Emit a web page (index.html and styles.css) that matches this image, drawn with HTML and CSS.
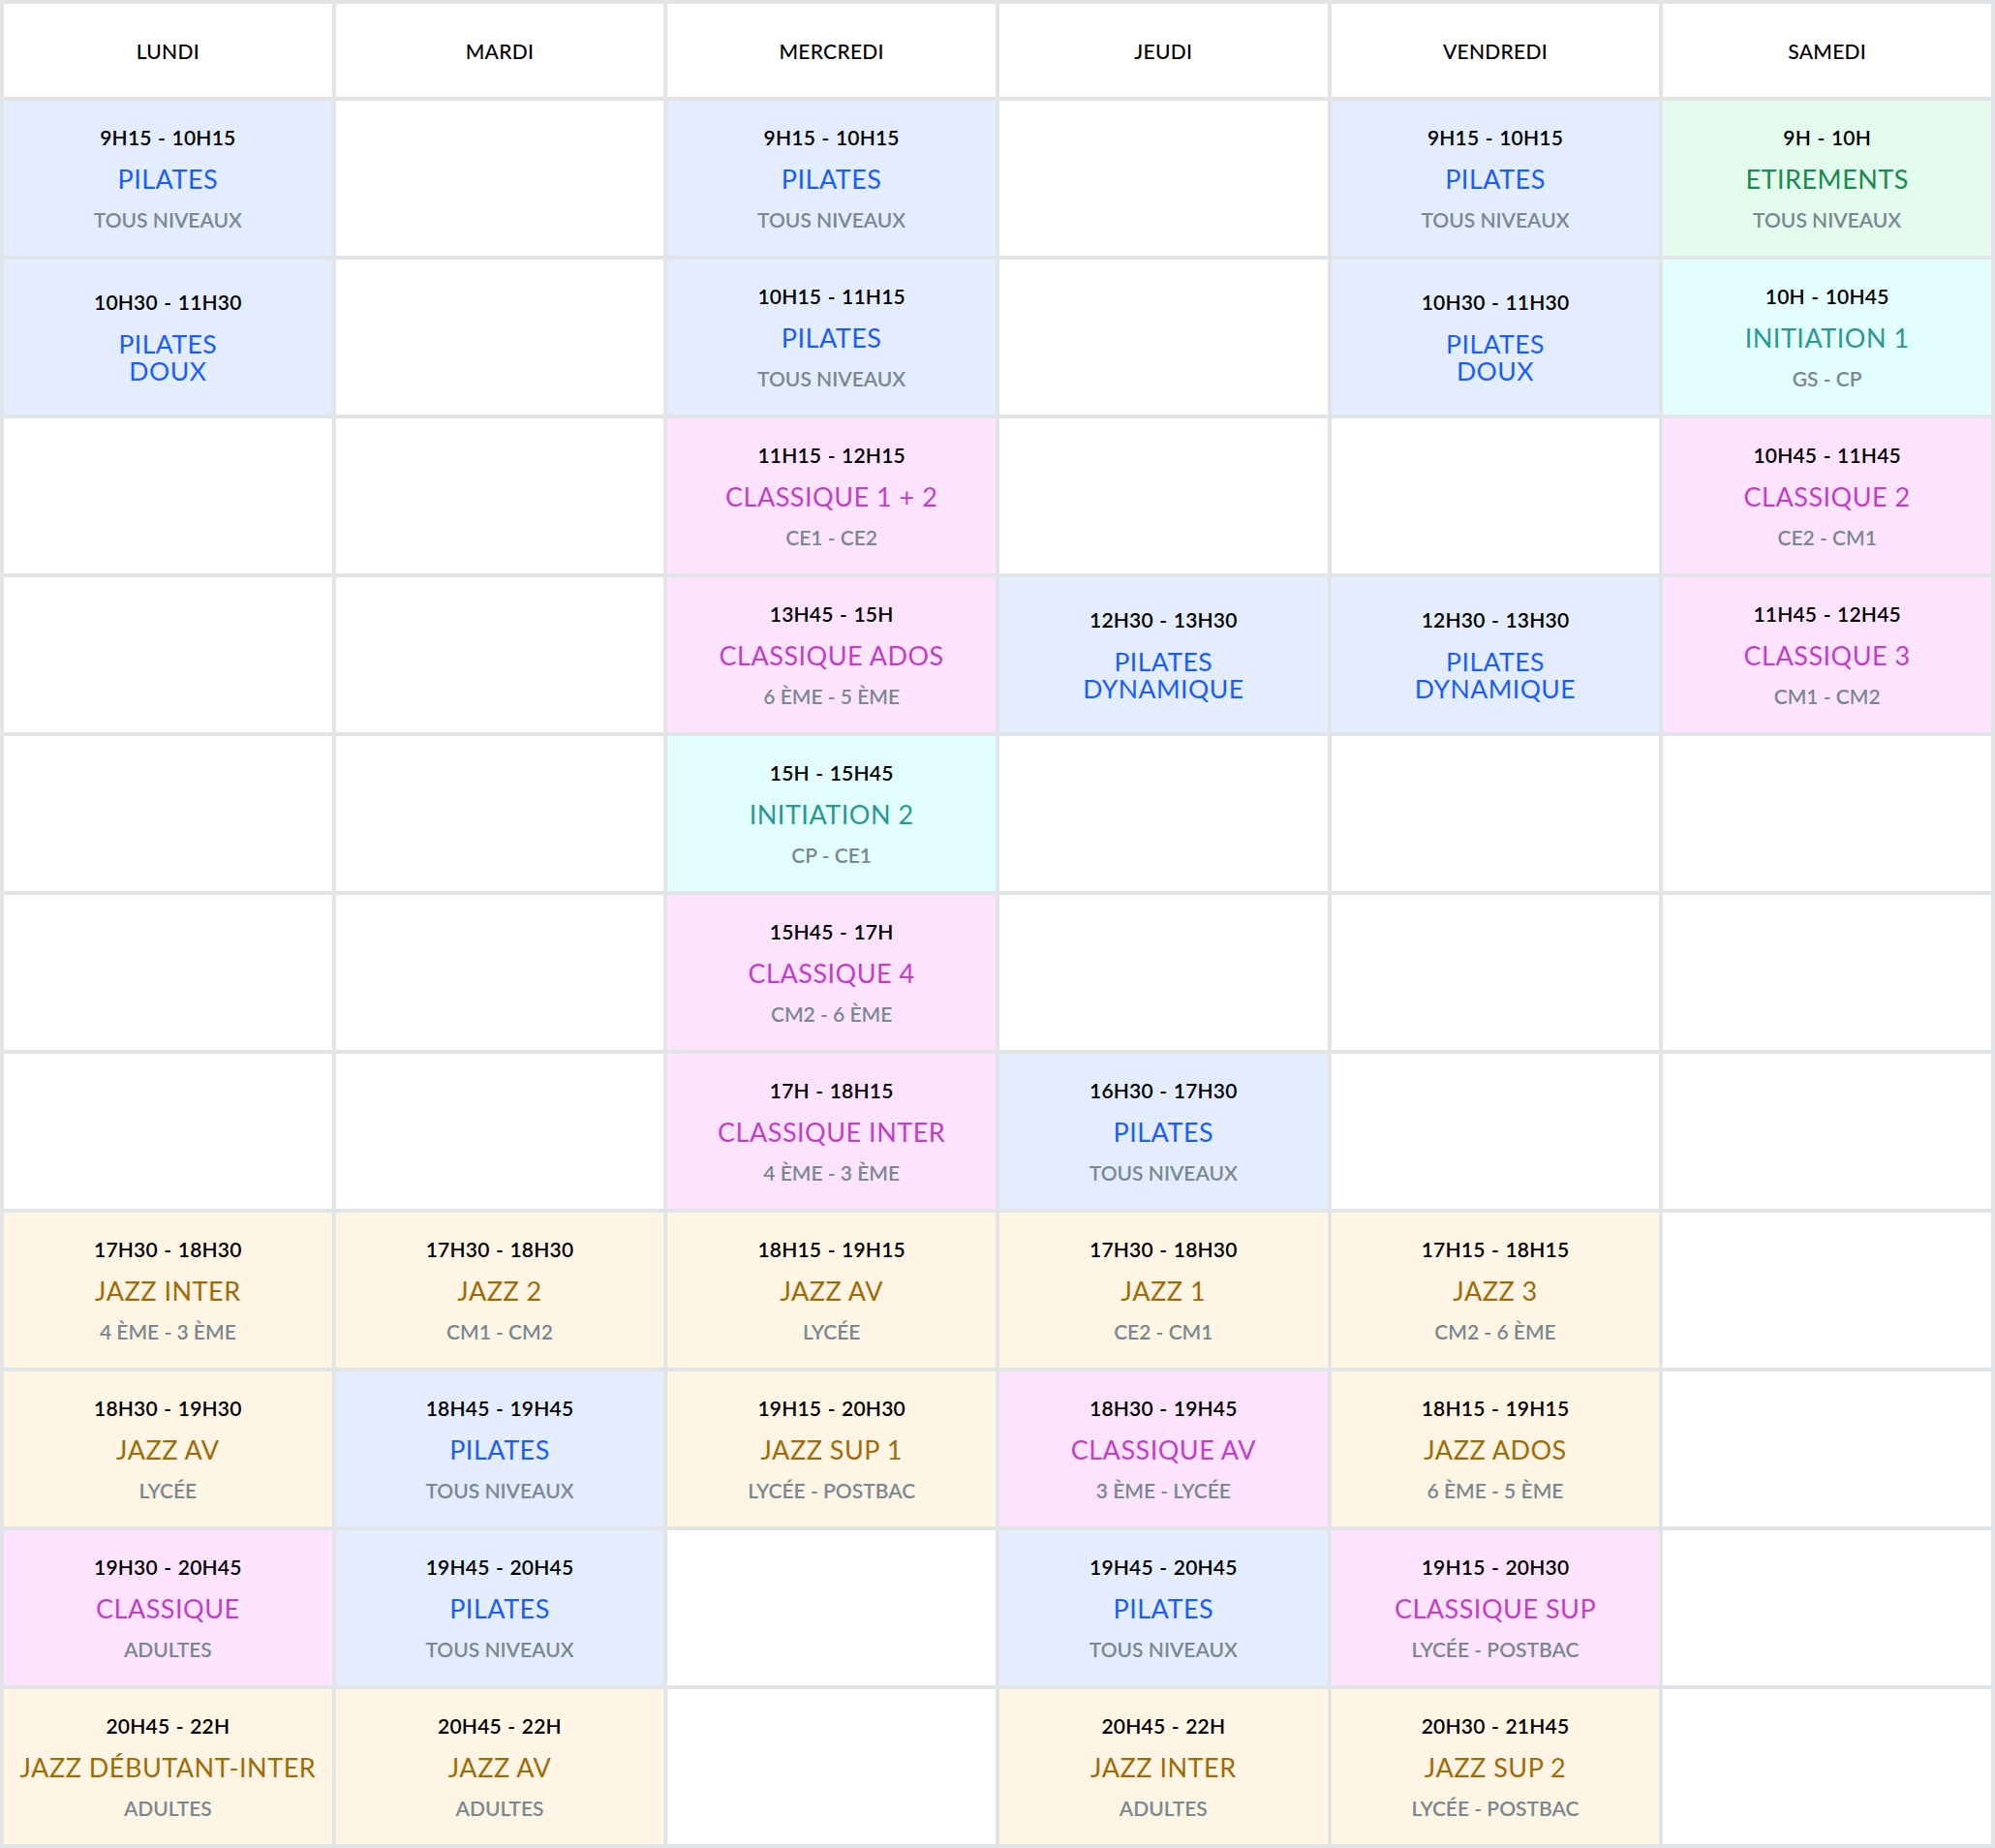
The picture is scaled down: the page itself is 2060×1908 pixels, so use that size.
FILE: index.html
```html
<!DOCTYPE html>
<html lang="fr">
<head>
<meta charset="utf-8">
<title>Planning</title>
<link rel="stylesheet" href="styles.css">
</head>
<body>
<div class="schedule">
  <div class="head">LUNDI</div>
  <div class="head">MARDI</div>
  <div class="head">MERCREDI</div>
  <div class="head">JEUDI</div>
  <div class="head">VENDREDI</div>
  <div class="head">SAMEDI</div>

  <!-- row 1 -->
  <div class="cell blue"><span class="time">9H15 - 10H15</span><span class="title">PILATES</span><span class="sub">TOUS NIVEAUX</span></div>
  <div class="cell"></div>
  <div class="cell blue"><span class="time">9H15 - 10H15</span><span class="title">PILATES</span><span class="sub">TOUS NIVEAUX</span></div>
  <div class="cell"></div>
  <div class="cell blue"><span class="time">9H15 - 10H15</span><span class="title">PILATES</span><span class="sub">TOUS NIVEAUX</span></div>
  <div class="cell green"><span class="time">9H - 10H</span><span class="title">ETIREMENTS</span><span class="sub">TOUS NIVEAUX</span></div>

  <!-- row 2 -->
  <div class="cell blue"><span class="time">10H30 - 11H30</span><span class="title two">PILATES<br>DOUX</span></div>
  <div class="cell"></div>
  <div class="cell blue"><span class="time">10H15 - 11H15</span><span class="title">PILATES</span><span class="sub">TOUS NIVEAUX</span></div>
  <div class="cell"></div>
  <div class="cell blue"><span class="time">10H30 - 11H30</span><span class="title two">PILATES<br>DOUX</span></div>
  <div class="cell cyan"><span class="time">10H - 10H45</span><span class="title">INITIATION 1</span><span class="sub">GS - CP</span></div>

  <!-- row 3 -->
  <div class="cell"></div>
  <div class="cell"></div>
  <div class="cell pink"><span class="time">11H15 - 12H15</span><span class="title">CLASSIQUE 1 + 2</span><span class="sub">CE1 - CE2</span></div>
  <div class="cell"></div>
  <div class="cell"></div>
  <div class="cell pink"><span class="time">10H45 - 11H45</span><span class="title">CLASSIQUE 2</span><span class="sub">CE2 - CM1</span></div>

  <!-- row 4 -->
  <div class="cell"></div>
  <div class="cell"></div>
  <div class="cell pink"><span class="time">13H45 - 15H</span><span class="title">CLASSIQUE ADOS</span><span class="sub">6 ÈME - 5 ÈME</span></div>
  <div class="cell blue"><span class="time">12H30 - 13H30</span><span class="title two">PILATES<br>DYNAMIQUE</span></div>
  <div class="cell blue"><span class="time">12H30 - 13H30</span><span class="title two">PILATES<br>DYNAMIQUE</span></div>
  <div class="cell pink"><span class="time">11H45 - 12H45</span><span class="title">CLASSIQUE 3</span><span class="sub">CM1 - CM2</span></div>

  <!-- row 5 -->
  <div class="cell"></div>
  <div class="cell"></div>
  <div class="cell cyan"><span class="time">15H - 15H45</span><span class="title">INITIATION 2</span><span class="sub">CP - CE1</span></div>
  <div class="cell"></div>
  <div class="cell"></div>
  <div class="cell"></div>

  <!-- row 6 -->
  <div class="cell"></div>
  <div class="cell"></div>
  <div class="cell pink"><span class="time">15H45 - 17H</span><span class="title">CLASSIQUE 4</span><span class="sub">CM2 - 6 ÈME</span></div>
  <div class="cell"></div>
  <div class="cell"></div>
  <div class="cell"></div>

  <!-- row 7 -->
  <div class="cell"></div>
  <div class="cell"></div>
  <div class="cell pink"><span class="time">17H - 18H15</span><span class="title">CLASSIQUE INTER</span><span class="sub">4 ÈME - 3 ÈME</span></div>
  <div class="cell blue"><span class="time">16H30 - 17H30</span><span class="title">PILATES</span><span class="sub">TOUS NIVEAUX</span></div>
  <div class="cell"></div>
  <div class="cell"></div>

  <!-- row 8 -->
  <div class="cell yellow"><span class="time">17H30 - 18H30</span><span class="title">JAZZ INTER</span><span class="sub">4 ÈME - 3 ÈME</span></div>
  <div class="cell yellow"><span class="time">17H30 - 18H30</span><span class="title">JAZZ 2</span><span class="sub">CM1 - CM2</span></div>
  <div class="cell yellow"><span class="time">18H15 - 19H15</span><span class="title">JAZZ AV</span><span class="sub">LYCÉE</span></div>
  <div class="cell yellow"><span class="time">17H30 - 18H30</span><span class="title">JAZZ 1</span><span class="sub">CE2 - CM1</span></div>
  <div class="cell yellow"><span class="time">17H15 - 18H15</span><span class="title">JAZZ 3</span><span class="sub">CM2 - 6 ÈME</span></div>
  <div class="cell"></div>

  <!-- row 9 -->
  <div class="cell yellow"><span class="time">18H30 - 19H30</span><span class="title">JAZZ AV</span><span class="sub">LYCÉE</span></div>
  <div class="cell blue"><span class="time">18H45 - 19H45</span><span class="title">PILATES</span><span class="sub">TOUS NIVEAUX</span></div>
  <div class="cell yellow"><span class="time">19H15 - 20H30</span><span class="title">JAZZ SUP 1</span><span class="sub">LYCÉE - POSTBAC</span></div>
  <div class="cell pink"><span class="time">18H30 - 19H45</span><span class="title">CLASSIQUE AV</span><span class="sub">3 ÈME - LYCÉE</span></div>
  <div class="cell yellow"><span class="time">18H15 - 19H15</span><span class="title">JAZZ ADOS</span><span class="sub">6 ÈME - 5 ÈME</span></div>
  <div class="cell"></div>

  <!-- row 10 -->
  <div class="cell pink"><span class="time">19H30 - 20H45</span><span class="title">CLASSIQUE</span><span class="sub">ADULTES</span></div>
  <div class="cell blue"><span class="time">19H45 - 20H45</span><span class="title">PILATES</span><span class="sub">TOUS NIVEAUX</span></div>
  <div class="cell"></div>
  <div class="cell blue"><span class="time">19H45 - 20H45</span><span class="title">PILATES</span><span class="sub">TOUS NIVEAUX</span></div>
  <div class="cell pink"><span class="time">19H15 - 20H30</span><span class="title">CLASSIQUE SUP</span><span class="sub">LYCÉE - POSTBAC</span></div>
  <div class="cell"></div>

  <!-- row 11 -->
  <div class="cell yellow"><span class="time">20H45 - 22H</span><span class="title">JAZZ DÉBUTANT-INTER</span><span class="sub">ADULTES</span></div>
  <div class="cell yellow"><span class="time">20H45 - 22H</span><span class="title">JAZZ AV</span><span class="sub">ADULTES</span></div>
  <div class="cell"></div>
  <div class="cell yellow"><span class="time">20H45 - 22H</span><span class="title">JAZZ INTER</span><span class="sub">ADULTES</span></div>
  <div class="cell yellow"><span class="time">20H30 - 21H45</span><span class="title">JAZZ SUP 2</span><span class="sub">LYCÉE - POSTBAC</span></div>
  <div class="cell"></div>
</div>
</body>
</html>
```
FILE: styles.css
```css
html, body {
  margin: 0;
  padding: 0;
  background: #ffffff;
}

body {
  font-family: "Lato", "Liberation Sans", sans-serif;
  color: #000000;
}

.schedule {
  width: 2060px;
  height: 1908px;
  box-sizing: border-box;
  display: grid;
  grid-template-columns: repeat(6, 1fr);
  grid-template-rows: 96px repeat(11, 160px);
  gap: 4px;
  padding: 4px;
  background: #e2e5e7;
}

.head {
  background: #ffffff;
  display: flex;
  align-items: center;
  justify-content: center;
  font-size: 21px;
  font-weight: 500;
  letter-spacing: 0.3px;
}

.cell {
  background: #ffffff;
  display: flex;
  flex-direction: column;
  align-items: center;
  justify-content: center;
  text-align: center;
}

.time {
  font-size: 21px;
  line-height: 26px;
  font-weight: 600;
  letter-spacing: 0.2px;
  word-spacing: 1px;
}

.title {
  font-size: 27px;
  line-height: 28px;
  font-weight: 400;
  letter-spacing: 0.5px;
  margin-top: 16px;
}

.title.two {
  line-height: 28px;
  font-size: 26.5px;
}

.sub {
  font-size: 21px;
  line-height: 24px;
  font-weight: 600;
  color: #7b8891;
  margin-top: 16px;
}

.blue { background: #e3edfd; }
.blue .title { color: #1a5dff; }

.green { background: #e3fcee; }
.green .title { color: #1a8a4e; }

.cyan { background: #e2fefd; }
.cyan .title { color: #2a9792; }

.pink { background: #fde4fe; }
.pink .title { color: #c13fc6; }

.yellow { background: #fef5e5; }
.yellow .title { color: #a06b06; }
```
